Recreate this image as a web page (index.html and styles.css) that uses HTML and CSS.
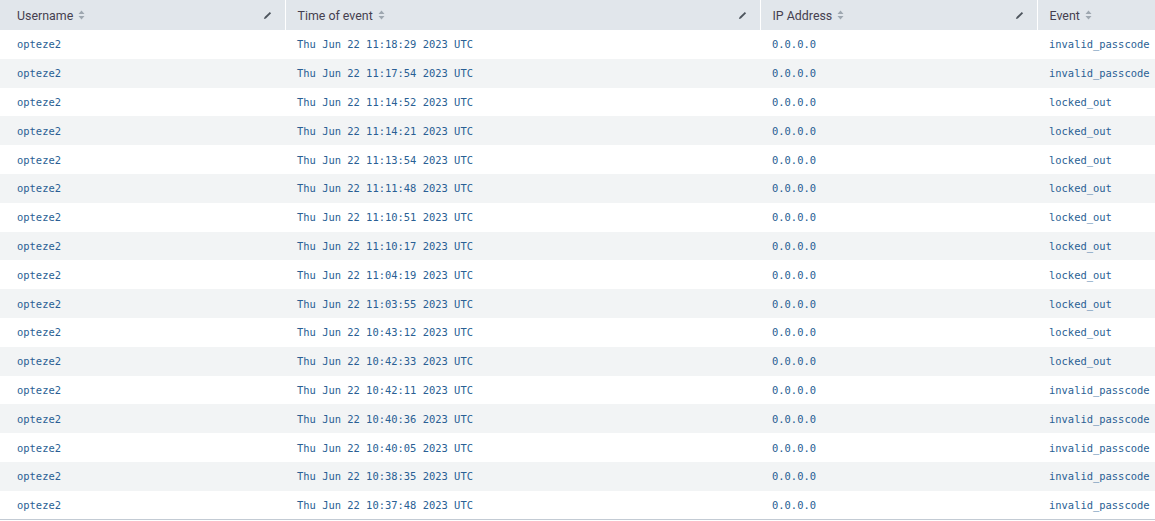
FILE: index.html
```html
<!DOCTYPE html>
<html>
<head>
<meta charset="utf-8">
<link rel="stylesheet" href="styles.css">
</head>
<body>
<table class="results">
  <colgroup>
    <col class="c1"><col class="c2"><col class="c3"><col class="c4">
  </colgroup>
  <thead>
    <tr>
      <th class="first"><div class="th-inner"><span class="label">Username <svg class="sort" viewBox="0 0 7 10"><path d="M3.5 0.5 L6.5 4 H0.5 Z M3.5 9.5 L6.5 6 H0.5 Z"/></svg></span><svg class="edit" viewBox="0 0 10 10"><path d="M1 9 L1.8 6.8 L7.6 1 L9 2.4 L3.2 8.2 Z"/></svg></div></th>
      <th><div class="th-inner"><span class="label">Time of event <svg class="sort" viewBox="0 0 7 10"><path d="M3.5 0.5 L6.5 4 H0.5 Z M3.5 9.5 L6.5 6 H0.5 Z"/></svg></span><svg class="edit" viewBox="0 0 10 10"><path d="M1 9 L1.8 6.8 L7.6 1 L9 2.4 L3.2 8.2 Z"/></svg></div></th>
      <th><div class="th-inner"><span class="label">IP Address <svg class="sort" viewBox="0 0 7 10"><path d="M3.5 0.5 L6.5 4 H0.5 Z M3.5 9.5 L6.5 6 H0.5 Z"/></svg></span><svg class="edit" viewBox="0 0 10 10"><path d="M1 9 L1.8 6.8 L7.6 1 L9 2.4 L3.2 8.2 Z"/></svg></div></th>
      <th class="last"><div class="th-inner"><span class="label">Event <svg class="sort" viewBox="0 0 7 10"><path d="M3.5 0.5 L6.5 4 H0.5 Z M3.5 9.5 L6.5 6 H0.5 Z"/></svg></span></div></th>
    </tr>
  </thead>
  <tbody>
    <tr><td class="first">opteze2</td><td>Thu Jun 22 11:18:29 2023 UTC</td><td>0.0.0.0</td><td>invalid_passcode</td></tr>
    <tr><td class="first">opteze2</td><td>Thu Jun 22 11:17:54 2023 UTC</td><td>0.0.0.0</td><td>invalid_passcode</td></tr>
    <tr><td class="first">opteze2</td><td>Thu Jun 22 11:14:52 2023 UTC</td><td>0.0.0.0</td><td>locked_out</td></tr>
    <tr><td class="first">opteze2</td><td>Thu Jun 22 11:14:21 2023 UTC</td><td>0.0.0.0</td><td>locked_out</td></tr>
    <tr><td class="first">opteze2</td><td>Thu Jun 22 11:13:54 2023 UTC</td><td>0.0.0.0</td><td>locked_out</td></tr>
    <tr><td class="first">opteze2</td><td>Thu Jun 22 11:11:48 2023 UTC</td><td>0.0.0.0</td><td>locked_out</td></tr>
    <tr><td class="first">opteze2</td><td>Thu Jun 22 11:10:51 2023 UTC</td><td>0.0.0.0</td><td>locked_out</td></tr>
    <tr><td class="first">opteze2</td><td>Thu Jun 22 11:10:17 2023 UTC</td><td>0.0.0.0</td><td>locked_out</td></tr>
    <tr><td class="first">opteze2</td><td>Thu Jun 22 11:04:19 2023 UTC</td><td>0.0.0.0</td><td>locked_out</td></tr>
    <tr><td class="first">opteze2</td><td>Thu Jun 22 11:03:55 2023 UTC</td><td>0.0.0.0</td><td>locked_out</td></tr>
    <tr><td class="first">opteze2</td><td>Thu Jun 22 10:43:12 2023 UTC</td><td>0.0.0.0</td><td>locked_out</td></tr>
    <tr><td class="first">opteze2</td><td>Thu Jun 22 10:42:33 2023 UTC</td><td>0.0.0.0</td><td>locked_out</td></tr>
    <tr><td class="first">opteze2</td><td>Thu Jun 22 10:42:11 2023 UTC</td><td>0.0.0.0</td><td>invalid_passcode</td></tr>
    <tr><td class="first">opteze2</td><td>Thu Jun 22 10:40:36 2023 UTC</td><td>0.0.0.0</td><td>invalid_passcode</td></tr>
    <tr><td class="first">opteze2</td><td>Thu Jun 22 10:40:05 2023 UTC</td><td>0.0.0.0</td><td>invalid_passcode</td></tr>
    <tr><td class="first">opteze2</td><td>Thu Jun 22 10:38:35 2023 UTC</td><td>0.0.0.0</td><td>invalid_passcode</td></tr>
    <tr><td class="first">opteze2</td><td>Thu Jun 22 10:37:48 2023 UTC</td><td>0.0.0.0</td><td>invalid_passcode</td></tr>
  </tbody>
</table>
</body>
</html>
```
FILE: styles.css
```css
html, body {
  margin: 0;
  padding: 0;
  background: #ffffff;
}

.results {
  width: 1155px;
  border-collapse: collapse;
  table-layout: fixed;
  border-bottom: 1px solid #c3cbd4;
}

.c1 { width: 285px; }
.c2 { width: 475px; }
.c3 { width: 277px; }
.c4 { width: 118px; }

.results th {
  height: 30px;
  padding: 0 0 0 12px;
  background: #e1e6eb;
  border-left: 1px solid #ffffff;
  text-align: left;
  font-family: Roboto, "Liberation Sans", sans-serif;
  font-size: 12.4px;
  font-weight: 400;
  color: #453f4f;
  vertical-align: middle;
  box-sizing: border-box;
}

.results th.first {
  border-left: none;
  padding-left: 17px;
}

.th-inner {
  display: flex;
  align-items: center;
  justify-content: space-between;
  padding-right: 13px;
}

.label {
  display: flex;
  align-items: center;
  gap: 5px;
  white-space: nowrap;
}

.sort {
  width: 7px;
  height: 10px;
  fill: #9ea7b0;
}

.edit {
  width: 9px;
  height: 9px;
  fill: #4c545c;
}

.results td {
  height: 28.8px;
  padding: 0 0 0 12px;
  box-sizing: border-box;
  font-family: "DejaVu Sans Mono", monospace;
  font-size: 10.45px;
  color: #2a5f94;
  white-space: nowrap;
  overflow: hidden;
  vertical-align: middle;
}

.results td.first {
  padding-left: 17px;
}

.results tbody tr:nth-child(even) td {
  background: #f2f4f5;
}
```
